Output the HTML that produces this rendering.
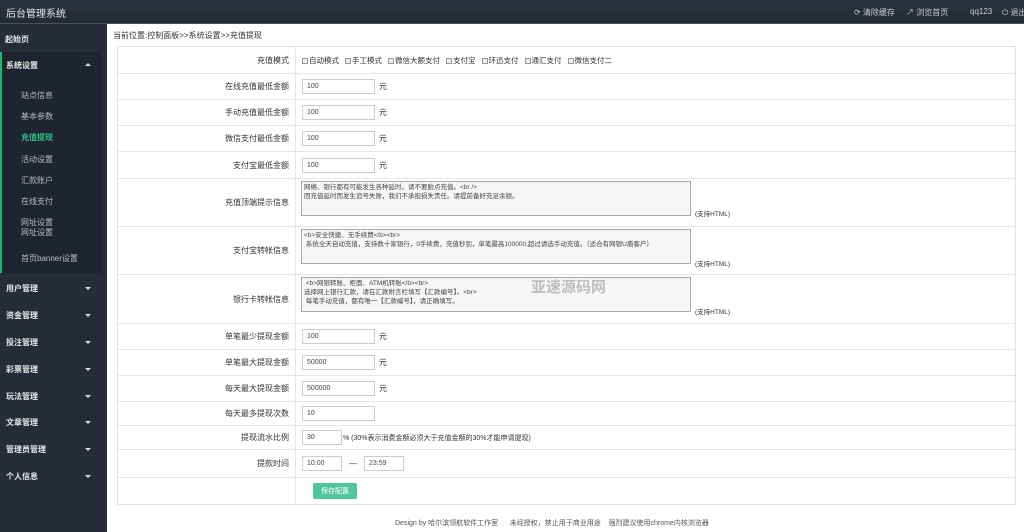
<!DOCTYPE html>
<html><head><meta charset="utf-8"><style>
*{margin:0;padding:0;box-sizing:border-box}
body{width:1024px;height:532px;overflow:hidden;background:#fff;font-family:"Liberation Sans","Noto Sans CJK SC",sans-serif;font-size:8px;color:#333;position:relative}
.top{position:absolute;left:0;top:0;width:1024px;height:24px;background:linear-gradient(#2c3440,#232a33);border-bottom:1px solid #4a525c}
.top .t{position:absolute;left:6px;top:5px;color:#e6e6e6;font-size:10px}
.top .r{position:absolute;top:7px;color:#ccc;font-size:8px;white-space:nowrap}
.side{position:absolute;left:0;top:24px;width:107px;height:508px;background:#262d37}
.side .sub{position:absolute;left:0;top:28px;width:102px;height:221px;background:#1f252e;border-left:2px solid #27b07a}
.si{position:absolute;left:6px;color:#e8e8e8;font-size:8px;font-weight:bold}
.ar{position:absolute;left:85px;width:0;height:0;border-left:3px solid transparent;border-right:3px solid transparent;border-top:3px solid #ddd}
.ss{position:absolute;left:21px;color:#bbb;font-size:8px}
.bc{position:absolute;left:113px;top:30px;font-size:8px;color:#333}
.tb{position:absolute;left:117px;top:46px;width:899px;border:1px solid #e2e2e2}
.row{position:relative;border-bottom:1px solid #e6e6e6}
.row:last-child{border-bottom:none}
.lab{position:absolute;left:0;top:0;bottom:0;width:178px;border-right:1px solid #e6e6e6;text-align:right;padding-right:6px;display:flex;align-items:center;justify-content:flex-end}
.val{position:absolute;left:184px;top:0;bottom:0;display:flex;align-items:center;gap:4px}
.in{display:inline-flex;align-items:center;width:73px;height:15px;border:1px solid #ccc;font-size:7px;padding:0 4px;color:#444}
.ta{position:absolute;left:183px;width:390px;border:1px solid #aaa;background:#f6f6f6;font-size:6.5px;line-height:9px;padding:1px 2px;color:#444;white-space:pre-wrap}
.sp{position:absolute;left:577px;font-size:6.5px}
.cb{display:inline-block;width:6px;height:6px;border:1px solid #999;background:#eee;margin-right:1px;vertical-align:-1px}
.btn{background:#4fc79c;color:#fff;font-size:7px;padding:3px 8px;border-radius:2px;margin-left:11px}
.foot{position:absolute;top:518px;left:395px;font-size:7px;color:#555;white-space:pre}
</style></head><body>
<div class="top"><div class="t">后台管理系统</div>
<div class="r" style="left:854px">⟳ 清除缓存</div><div class="r" style="left:906px">↗ 浏览首页</div><div class="r" style="left:970px">qq123</div><div class="r" style="left:1002px">⏻ 退出</div></div>
<div class="side">
<div class="si" style="top:10px;left:5px">起始页</div>
<div class="sub"></div>
<div class="si" style="top:36px">系统设置</div><div class="ar" style="top:39px;border-top:none;border-bottom:3px solid #ddd"></div>
<div class="ss" style="top:66px">站点信息</div>
<div class="ss" style="top:87px">基本参数</div>
<div class="ss" style="top:108px;color:#2ec58a;font-weight:bold">充值提现</div>
<div class="ss" style="top:130px">活动设置</div>
<div class="ss" style="top:151px">汇款账户</div>
<div class="ss" style="top:172px">在线支付</div>
<div class="ss" style="top:194px;line-height:10px">网址设置<br>网址设置</div>
<div class="ss" style="top:229px">首页banner设置</div>
<div class="si" style="top:259px">用户管理</div><div class="ar" style="top:263px"></div>
<div class="si" style="top:286px">资金管理</div><div class="ar" style="top:290px"></div>
<div class="si" style="top:313px">投注管理</div><div class="ar" style="top:317px"></div>
<div class="si" style="top:340px">彩票管理</div><div class="ar" style="top:344px"></div>
<div class="si" style="top:367px">玩法管理</div><div class="ar" style="top:371px"></div>
<div class="si" style="top:393px">文章管理</div><div class="ar" style="top:397px"></div>
<div class="si" style="top:420px">管理员管理</div><div class="ar" style="top:424px"></div>
<div class="si" style="top:447px">个人信息</div><div class="ar" style="top:451px"></div>
</div>
<div class="bc">当前位置:控制面板&gt;&gt;系统设置&gt;&gt;充值提现</div>
<div class="tb">
<div class="row" style="height:27px"><div class="lab">充值模式</div><div class="val" style="gap:6px;font-size:7.5px"><span><i class="cb"></i>自动模式</span><span><i class="cb"></i>手工模式</span><span><i class="cb"></i>微信大额支付</span><span><i class="cb"></i>支付宝</span><span><i class="cb"></i>环迅支付</span><span><i class="cb"></i>通汇支付</span><span><i class="cb"></i>微信支付二</span></div></div>
<div class="row" style="height:26px"><div class="lab">在线充值最低金额</div><div class="val"><span class="in">100</span>元</div></div>
<div class="row" style="height:26px"><div class="lab">手动充值最低金额</div><div class="val"><span class="in">100</span>元</div></div>
<div class="row" style="height:26px"><div class="lab">微信支付最低金额</div><div class="val"><span class="in">100</span>元</div></div>
<div class="row" style="height:27px"><div class="lab">支付宝最低金额</div><div class="val"><span class="in">100</span>元</div></div>
<div class="row" style="height:48px"><div class="lab">充值顶端提示信息</div><div class="ta" style="top:2px;height:35px">网络、银行都有可能发生各种延时。请不要胎点充值。&lt;br /&gt;
因充值延时而发生追号失败，我们不承担损失责任。请提前备好充足余额。</div><div class="sp" style="top:29px">(支持HTML)</div></div>
<div class="row" style="height:48px"><div class="lab">支付宝转帐信息</div><div class="ta" style="top:2px;height:35px">&lt;b&gt;安全快捷、无手续费&lt;/b&gt;&lt;br&gt;
 系统全天自动充值，支持数十家银行，0手续费，充值秒到，单笔最高100000,超过请选手动充值。（适合有网银U盾客户）</div><div class="sp" style="top:31px">(支持HTML)</div></div>
<div class="row" style="height:49px"><div class="lab">银行卡转帐信息</div><div class="ta" style="top:2px;height:35px"> &lt;b&gt;网银转账、柜面、ATM机转账&lt;/b&gt;&lt;br&gt;
选择网上银行汇款，请在汇款附言栏填写【汇款编号】。&lt;br&gt;
 每笔手动充值，都有唯一【汇款编号】，请正确填写。</div><div class="sp" style="top:31px">(支持HTML)</div>
<div style="position:absolute;left:413px;top:1px;font-size:15px;font-weight:bold;color:rgba(120,120,120,.45)">亚速源码网</div></div>
<div class="row" style="height:26px"><div class="lab">单笔最少提现金额</div><div class="val"><span class="in">100</span>元</div></div>
<div class="row" style="height:26px"><div class="lab">单笔最大提现金额</div><div class="val"><span class="in">50000</span>元</div></div>
<div class="row" style="height:26px"><div class="lab">每天最大提现金额</div><div class="val"><span class="in">500000</span>元</div></div>
<div class="row" style="height:24px"><div class="lab">每天最多提现次数</div><div class="val"><span class="in">10</span></div></div>
<div class="row" style="height:24px"><div class="lab">提现流水比例</div><div class="val" style="gap:1px"><span class="in" style="width:40px">30</span><span style="font-size:7px">% (30%表示消费金额必须大于充值金额的30%才能申请提现)</span></div></div>
<div class="row" style="height:28px"><div class="lab">提款时间</div><div class="val" style="gap:7px"><span class="in" style="width:40px">10:00</span>—<span class="in" style="width:40px">23:59</span></div></div>
<div class="row" style="height:26px"><div class="lab"></div><div class="val"><span class="btn">保存配置</span></div></div>
</div>
<div class="foot">Design by 哈尔滨领航软件工作室      未经授权，禁止用于商业用途    强烈建议使用chrome内核浏览器</div>
</body></html>
